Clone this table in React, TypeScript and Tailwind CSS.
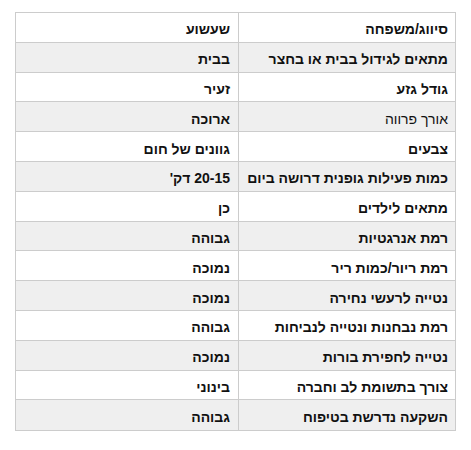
import React from "react";

const rows: [string, string, boolean?][] = [
  ["סיווג/משפחה", "שעשוע"],
  ["מתאים לגידול בבית או בחצר", "בבית"],
  ["גודל גזע", "זעיר"],
  ["אורך פרווה", "ארוכה", true],
  ["צבעים", "גוונים של חום"],
  ["כמות פעילות גופנית דרושה ביום", "20-15 דק'"],
  ["מתאים לילדים", "כן"],
  ["רמת אנרגטיות", "גבוהה"],
  ["רמת ריור/כמות ריר", "נמוכה"],
  ["נטייה לרעשי נחירה", "נמוכה"],
  ["רמת נבחנות ונטייה לנביחות", "גבוהה"],
  ["נטייה לחפירת בורות", "נמוכה"],
  ["צורך בתשומת לב וחברה", "בינוני"],
  ["השקעה נדרשת בטיפוח", "גבוהה"],
];

export default function App() {
  return (
    <div className="w-[471px] h-[450px] bg-white pt-[12px] px-[15px]" style={{ fontFamily: '"Liberation Sans", Arial, sans-serif' }}>
      <div dir="rtl" className="border border-[#cccccc] text-[14px] text-[#111]">
        {rows.map(([k, v, light], i) => (
          <div
            key={i}
            className={`flex h-[29.8px] ${i < rows.length - 1 ? "border-b border-[#cccccc]" : ""} ${i % 2 === 1 ? "bg-[#efefef]" : "bg-white"}`}
          >
            <div className={`w-[217px] flex items-center pt-[5px] px-[7px] border-l border-[#cccccc] ${light ? "font-normal" : "font-bold"}`}>{k}</div>
            <div className="flex-1 flex items-center pt-[5px] px-[8px] font-bold">{v}</div>
          </div>
        ))}
      </div>
    </div>
  );
}
